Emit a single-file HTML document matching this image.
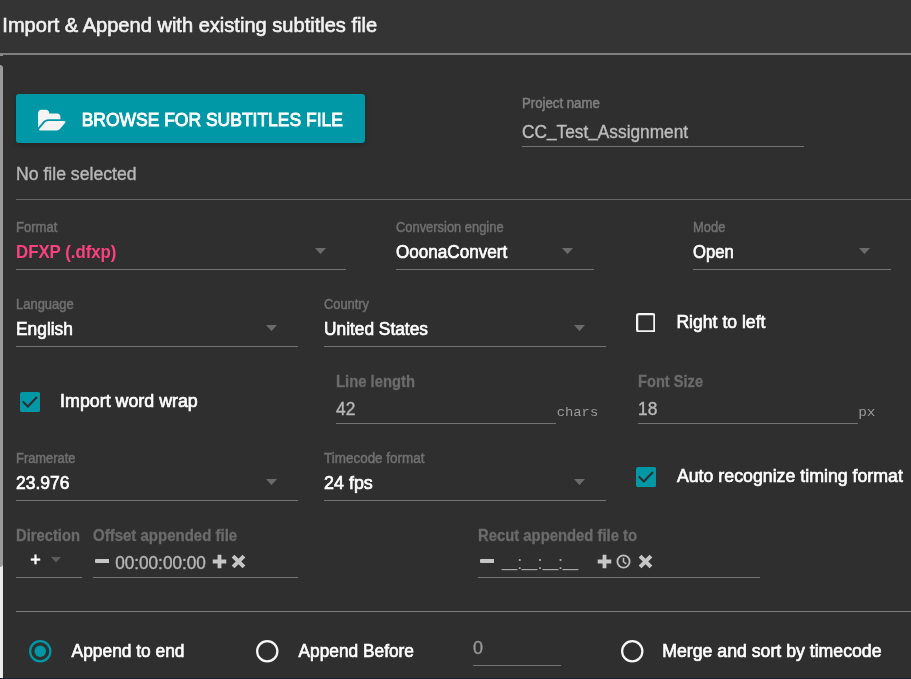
<!DOCTYPE html>
<html lang="en"><head><meta charset="utf-8"><title>Import &amp; Append with existing subtitles file</title>
<style>
html,body{margin:0;padding:0}
body{width:911px;height:679px;overflow:hidden;background:#2f2f2f;position:relative;font-family:"Liberation Sans",sans-serif}
.a{position:absolute}
.t{position:absolute;left:0;top:0;white-space:pre;line-height:1;margin:0;transform-origin:0 0;will-change:opacity}
.hl{position:absolute;height:1px;background:#747474}
</style></head><body>

<div class="a" style="left:0;top:0;width:911px;height:54px;background:#343434"></div>
<div class="a" style="left:0;top:53px;width:911px;height:2px;background:#7f7f7f"></div>
<div class="a" style="left:0;top:560px;width:3px;height:118px;background:linear-gradient(90deg,#f0f0f0,#e6e6e6)"></div><div class="a" style="left:0;top:54px;width:3px;height:2px;background:#8c8c8c"></div>
<div class="a" style="left:0;top:65px;width:3px;height:502px;background:#9b9b9b;border-radius:0 3px 3px 0"></div>
<div class="a" style="left:0;top:678px;width:911px;height:1px;background:#19233a"></div>
<div class="a" style="left:16px;top:94px;width:349px;height:49px;background:#0097a7;border-radius:3px;box-shadow:0 2px 5px rgba(0,0,0,.26)"></div>
<svg class="a" style="left:37.6px;top:107.8px" width="28.1" height="26.2" viewBox="0 0 1920 1792"><path fill="#f4f4f4" d="M1879 952q0 31-31 66l-336 396q-43 51-120.500 86.500T1248 1536H160q-34 0-60.500-13T73 1480q0-31 31-66l336-396q43-51 120.500-86.500T704 896h1088q34 0 60.500 13t26.500 43zM1536 608v160H704q-94 0-197 47.500T343 935L6 1331l-5 6q0-4-.5-12.500T0 1312V352q0-92 66-158t158-66h320q92 0 158 66t66 158v32h544q92 0 158 66t66 158z"/></svg>
<div class="hl" style="left:16px;top:199px;width:895px;background:#666"></div>
<div class="hl" style="left:16px;top:611px;width:895px;background:#7c7c7c"></div>
<div class="hl" style="left:522px;top:146px;width:282px"></div>
<div class="hl" style="left:16px;top:269px;width:330px"></div>
<div class="hl" style="left:396px;top:269px;width:198px"></div>
<div class="hl" style="left:693px;top:269px;width:198px"></div>
<div class="hl" style="left:16px;top:346px;width:282px"></div>
<div class="hl" style="left:324px;top:346px;width:282px"></div>
<div class="hl" style="left:336px;top:423px;width:220px"></div>
<div class="hl" style="left:638px;top:423px;width:220px"></div>
<div class="hl" style="left:16px;top:500px;width:282px"></div>
<div class="hl" style="left:324px;top:500px;width:282px"></div>
<div class="hl" style="left:16px;top:577px;width:66px"></div>
<div class="hl" style="left:93px;top:577px;width:205px"></div>
<div class="hl" style="left:478px;top:577px;width:282px"></div>
<div class="hl" style="left:473px;top:665px;width:88px"></div>
<svg class="a" style="left:314.5px;top:247.5px" width="11" height="6.1" viewBox="0 0 11 6.1"><path d="M0 0H11L5.5 6.1Z" fill="#6b6b6b"/></svg>
<svg class="a" style="left:562px;top:247.5px" width="11" height="6.1" viewBox="0 0 11 6.1"><path d="M0 0H11L5.5 6.1Z" fill="#6b6b6b"/></svg>
<svg class="a" style="left:859px;top:247.5px" width="11" height="6.1" viewBox="0 0 11 6.1"><path d="M0 0H11L5.5 6.1Z" fill="#6b6b6b"/></svg>
<svg class="a" style="left:266px;top:324.5px" width="11" height="6.1" viewBox="0 0 11 6.1"><path d="M0 0H11L5.5 6.1Z" fill="#6b6b6b"/></svg>
<svg class="a" style="left:574px;top:324.5px" width="11" height="6.1" viewBox="0 0 11 6.1"><path d="M0 0H11L5.5 6.1Z" fill="#6b6b6b"/></svg>
<svg class="a" style="left:266px;top:478.5px" width="11" height="6.1" viewBox="0 0 11 6.1"><path d="M0 0H11L5.5 6.1Z" fill="#6b6b6b"/></svg>
<svg class="a" style="left:574px;top:478.5px" width="11" height="6.1" viewBox="0 0 11 6.1"><path d="M0 0H11L5.5 6.1Z" fill="#6b6b6b"/></svg>
<svg class="a" style="left:51px;top:556.5px" width="10" height="5.5" viewBox="0 0 10 5.5"><path d="M0 0H10L5 5.5Z" fill="#5c5c5c"/></svg>
<svg class="a" style="left:635.95px;top:312.9px" width="19.5" height="19.6" viewBox="0 0 20 20"><rect x="1.15" y="1.15" width="17.7" height="17.7" rx="1.6" fill="none" stroke="#f4f4f4" stroke-width="2.3"/></svg>
<svg class="a" style="left:19.5px;top:391.95px" width="20.2" height="20.2" viewBox="0 0 20 20"><rect width="20" height="20" rx="2.2" fill="#0097a7"/><path d="M2.7 9.3L7.8 14.4L16.8 4.9" fill="none" stroke="#2d2d2d" stroke-width="2.05"/></svg>
<svg class="a" style="left:635.85px;top:466.75px" width="20.2" height="20.2" viewBox="0 0 20 20"><rect width="20" height="20" rx="2.2" fill="#0097a7"/><path d="M2.7 9.3L7.8 14.4L16.8 4.9" fill="none" stroke="#2d2d2d" stroke-width="2.05"/></svg>
<svg class="a" style="left:29.45px;top:640.0px" width="22.5" height="22.5" viewBox="0 0 22 22"><circle cx="11" cy="11" r="9.9" fill="none" stroke="#0097a7" stroke-width="2.2"/><circle cx="11" cy="11" r="5.6" fill="#0097a7"/></svg>
<svg class="a" style="left:256.4px;top:640.0px" width="22.5" height="22.5" viewBox="0 0 22 22"><circle cx="11" cy="11" r="9.9" fill="none" stroke="#f7f7f7" stroke-width="2.2"/></svg>
<svg class="a" style="left:621.4px;top:640.0px" width="22.5" height="22.5" viewBox="0 0 22 22"><circle cx="11" cy="11" r="9.9" fill="none" stroke="#f7f7f7" stroke-width="2.2"/></svg>
<svg class="a" style="left:94.5px;top:558.8px" width="14.5" height="4" viewBox="0 0 14.5 4"><rect width="14.5" height="4" rx="1" fill="#c6c6c6"/></svg>
<svg class="a" style="left:212.05px;top:553.9px" width="15" height="15" viewBox="0 0 14.5 14.5"><path d="M5.4 0.7h3.7v4.7h4.7v3.7h-4.7v4.7h-3.7v-4.7h-4.7v-3.7h4.7z" fill="#c6c6c6"/></svg>
<svg class="a" style="left:231.05px;top:553.9px" width="15" height="15" viewBox="0 0 14.5 14.5"><path d="M7.25 4.6L11.2 0.65L13.85 3.3L9.9 7.25L13.85 11.2L11.2 13.85L7.25 9.9L3.3 13.85L0.65 11.2L4.6 7.25L0.65 3.3L3.3 0.65Z" fill="#c6c6c6"/></svg>
<svg class="a" style="left:479.8px;top:558.8px" width="14.5" height="4" viewBox="0 0 14.5 4"><rect width="14.5" height="4" rx="1" fill="#c6c6c6"/></svg>
<svg class="a" style="left:597.15px;top:553.9px" width="15" height="15" viewBox="0 0 14.5 14.5"><path d="M5.4 0.7h3.7v4.7h4.7v3.7h-4.7v4.7h-3.7v-4.7h-4.7v-3.7h4.7z" fill="#c6c6c6"/></svg>
<svg class="a" style="left:615.75px;top:553.9px" width="15" height="15" viewBox="0 0 14.5 14.5"><circle cx="7.25" cy="7.25" r="5.9" fill="none" stroke="#bcbcbc" stroke-width="1.8"/><path d="M7.25 3.6V7.6L9.9 9.6" fill="none" stroke="#c0c0c0" stroke-width="1.5"/></svg>
<svg class="a" style="left:637.65px;top:553.9px" width="15" height="15" viewBox="0 0 14.5 14.5"><path d="M7.25 4.6L11.2 0.65L13.85 3.3L9.9 7.25L13.85 11.2L11.2 13.85L7.25 9.9L3.3 13.85L0.65 11.2L4.6 7.25L0.65 3.3L3.3 0.65Z" fill="#c6c6c6"/></svg>
<div class="t" style="transform:translate(2.33px,15.07px) scaleX(1.0034);font-size:20px;font-weight:400;color:#f2f2f2;-webkit-text-stroke:0.6px #f2f2f2;">Import &amp; Append with existing subtitles file</div>
<div class="t" style="transform:translate(81.63px,110.56px) scaleX(0.9712);font-size:18px;font-weight:400;color:#ffffff;-webkit-text-stroke:0.85px #ffffff;">BROWSE FOR SUBTITLES FILE</div>
<div class="t" style="transform:translate(16.00px,164.76px) scaleX(0.9791);font-size:18px;font-weight:400;color:#b6b6b6;-webkit-text-stroke:0.4px #b6b6b6;">No file selected</div>
<div class="t" style="transform:translate(522.00px,96.25px) scaleX(0.9434);font-size:14px;font-weight:400;color:#808080;-webkit-text-stroke:0.5px #808080;">Project name</div>
<div class="t" style="transform:translate(522.00px,123.01px) scaleX(0.9594);font-size:18px;font-weight:400;color:#bcbcbc;-webkit-text-stroke:0.4px #bcbcbc;">CC<span style="position:relative;top:-1.6px">_</span>Test<span style="position:relative;top:-1.6px">_</span>Assignment</div>
<div class="t" style="transform:translate(16.00px,220.05px) scaleX(0.9307);font-size:14px;font-weight:400;color:#707070;-webkit-text-stroke:0.5px #707070;">Format</div>
<div class="t" style="transform:translate(16.00px,243.01px) scaleX(0.9331);font-size:18px;font-weight:700;color:#fb4180;">DFXP (.dfxp)</div>
<div class="t" style="transform:translate(396.00px,220.05px) scaleX(0.9216);font-size:14px;font-weight:400;color:#707070;-webkit-text-stroke:0.5px #707070;">Conversion engine</div>
<div class="t" style="transform:translate(396.00px,243.01px) scaleX(0.9498);font-size:18px;font-weight:400;color:#ffffff;-webkit-text-stroke:0.65px #ffffff;">OoonaConvert</div>
<div class="t" style="transform:translate(693.00px,220.05px) scaleX(0.9245);font-size:14px;font-weight:400;color:#707070;-webkit-text-stroke:0.5px #707070;">Mode</div>
<div class="t" style="transform:translate(693.00px,243.01px) scaleX(0.9252);font-size:18px;font-weight:400;color:#ffffff;-webkit-text-stroke:0.65px #ffffff;">Open</div>
<div class="t" style="transform:translate(16.00px,297.25px) scaleX(0.9267);font-size:14px;font-weight:400;color:#707070;-webkit-text-stroke:0.5px #707070;">Language</div>
<div class="t" style="transform:translate(16.00px,319.76px) scaleX(0.9641);font-size:18px;font-weight:400;color:#ffffff;-webkit-text-stroke:0.65px #ffffff;">English</div>
<div class="t" style="transform:translate(324.00px,297.25px) scaleX(0.9189);font-size:14px;font-weight:400;color:#707070;-webkit-text-stroke:0.5px #707070;">Country</div>
<div class="t" style="transform:translate(324.00px,319.76px) scaleX(0.9619);font-size:18px;font-weight:400;color:#ffffff;-webkit-text-stroke:0.65px #ffffff;">United States</div>
<div class="t" style="transform:translate(676.40px,313.01px) scaleX(0.9778);font-size:18px;font-weight:400;color:#ffffff;-webkit-text-stroke:0.65px #ffffff;">Right to left</div>
<div class="t" style="transform:translate(60.12px,392.26px) scaleX(0.9900);font-size:18px;font-weight:400;color:#ffffff;-webkit-text-stroke:0.65px #ffffff;">Import word wrap</div>
<div class="t" style="transform:translate(336.00px,373.77px) scaleX(0.9402);font-size:15.75px;font-weight:700;color:#6b6b6b;-webkit-text-stroke:0.3px #6b6b6b;">Line length</div>
<div class="t" style="transform:translate(336.00px,399.76px) scaleX(0.9657);font-size:18px;font-weight:400;color:#b6b6b6;-webkit-text-stroke:0.4px #b6b6b6;">42</div>
<div class="t" style="transform:translate(556.64px,405.65px) scaleX(1.0265);font-size:13.5px;font-weight:400;color:#9a9a9a;font-family:'Liberation Mono', monospace;">chars</div>
<div class="t" style="transform:translate(638.00px,373.77px) scaleX(0.9299);font-size:15.75px;font-weight:700;color:#6b6b6b;-webkit-text-stroke:0.3px #6b6b6b;">Font Size</div>
<div class="t" style="transform:translate(638.00px,399.76px) scaleX(0.9654);font-size:18px;font-weight:400;color:#b6b6b6;-webkit-text-stroke:0.4px #b6b6b6;">18</div>
<div class="t" style="transform:translate(858.13px,405.65px) scaleX(1.0668);font-size:13.5px;font-weight:400;color:#9a9a9a;font-family:'Liberation Mono', monospace;">px</div>
<div class="t" style="transform:translate(16.00px,450.75px) scaleX(0.9217);font-size:14px;font-weight:400;color:#707070;-webkit-text-stroke:0.5px #707070;">Framerate</div>
<div class="t" style="transform:translate(16.00px,473.51px) scaleX(0.9710);font-size:18px;font-weight:400;color:#ffffff;-webkit-text-stroke:0.65px #ffffff;">23.976</div>
<div class="t" style="transform:translate(324.00px,450.75px) scaleX(0.9615);font-size:14px;font-weight:400;color:#707070;-webkit-text-stroke:0.5px #707070;">Timecode format</div>
<div class="t" style="transform:translate(324.00px,473.51px) scaleX(0.9954);font-size:18px;font-weight:400;color:#ffffff;-webkit-text-stroke:0.65px #ffffff;">24 fps</div>
<div class="t" style="transform:translate(676.91px,467.26px) scaleX(0.9863);font-size:18px;font-weight:400;color:#ffffff;-webkit-text-stroke:0.65px #ffffff;">Auto recognize timing format</div>
<div class="t" style="transform:translate(16.00px,527.77px) scaleX(0.9367);font-size:15.75px;font-weight:700;color:#6b6b6b;-webkit-text-stroke:0.3px #6b6b6b;">Direction</div>
<div class="t" style="transform:translate(30.32px,551.36px) scaleX(1.0000);font-size:18px;font-weight:400;color:#ffffff;-webkit-text-stroke:0.65px #ffffff;">+</div>
<div class="t" style="transform:translate(93.00px,527.77px) scaleX(0.9523);font-size:15.75px;font-weight:700;color:#6b6b6b;-webkit-text-stroke:0.3px #6b6b6b;">Offset appended file</div>
<div class="t" style="transform:translate(115.14px,553.76px) scaleX(0.9539);font-size:18px;font-weight:400;color:#b6b6b6;-webkit-text-stroke:0.4px #b6b6b6;">00:00:00:00</div>
<div class="t" style="transform:translate(478.00px,527.77px) scaleX(0.9421);font-size:15.75px;font-weight:700;color:#6b6b6b;-webkit-text-stroke:0.3px #6b6b6b;">Recut appended file to</div>
<div class="t" style="transform:translate(501.74px,554.26px) scaleX(1.0000);font-size:18px;font-weight:400;color:#a6a6a6;"><span style="display:inline-block;width:15.4px;position:relative;top:-2.7px"><span style="display:inline-block;transform:scaleX(.77);transform-origin:0 0">__</span></span>:<span style="display:inline-block;width:15.4px;position:relative;top:-2.7px"><span style="display:inline-block;transform:scaleX(.77);transform-origin:0 0">__</span></span>:<span style="display:inline-block;width:15.4px;position:relative;top:-2.7px"><span style="display:inline-block;transform:scaleX(.77);transform-origin:0 0">__</span></span>:<span style="display:inline-block;width:15.4px;position:relative;top:-2.7px"><span style="display:inline-block;transform:scaleX(.77);transform-origin:0 0">__</span></span></div>
<div class="t" style="transform:translate(71.60px,641.76px) scaleX(0.9642);font-size:18px;font-weight:400;color:#ffffff;-webkit-text-stroke:0.65px #ffffff;">Append to end</div>
<div class="t" style="transform:translate(298.57px,641.76px) scaleX(0.9608);font-size:18px;font-weight:400;color:#ffffff;-webkit-text-stroke:0.65px #ffffff;">Append Before</div>
<div class="t" style="transform:translate(473.00px,639.26px) scaleX(1.0000);font-size:18px;font-weight:400;color:#9a9a9a;-webkit-text-stroke:0.3px #9a9a9a;">0</div>
<div class="t" style="transform:translate(662.27px,641.76px) scaleX(0.9826);font-size:18px;font-weight:400;color:#ffffff;-webkit-text-stroke:0.65px #ffffff;">Merge and sort by timecode</div>
</body></html>
